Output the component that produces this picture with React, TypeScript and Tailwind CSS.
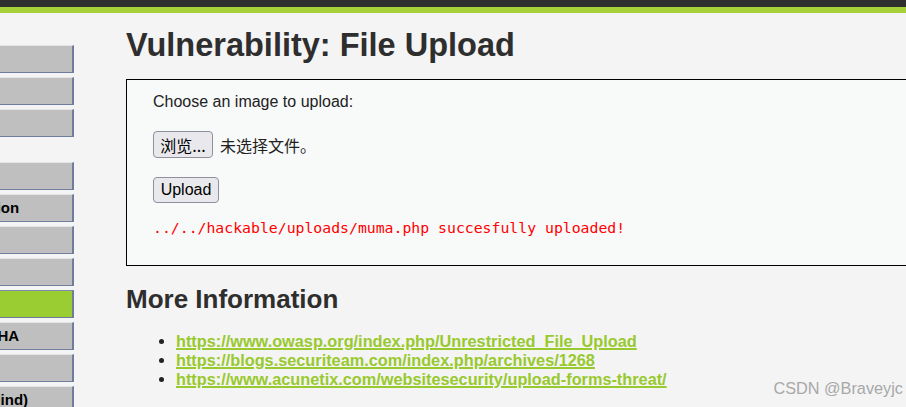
import React from "react";

const menuTop = [
  { label: "Home" },
  { label: "Instructions" },
  { label: "Setup", last: true },
];

const menuVulns = [
  { label: "Brute Force" },
  { label: "Command Injection" },
  { label: "CSRF" },
  { label: "File Inclusion" },
  { label: "File Upload", selected: true },
  { label: "Insecure CAPTCHA" },
  { label: "SQL Injection" },
  { label: "SQL Injection (Blind)" },
];

const links = [
  "https://www.owasp.org/index.php/Unrestricted_File_Upload",
  "https://blogs.securiteam.com/index.php/archives/1268",
  "https://www.acunetix.com/websitesecurity/upload-forms-threat/",
];

function MenuItem({ label, selected, last }: { label: string; selected?: boolean; last?: boolean }) {
  return (
    <div
      className={
        "h-[28px] flex items-center border-r-[2px] border-b border-[#6f7c9c] " +
        (selected ? "bg-[#9acd32] border-t border-t-[#7f8bab]" : "bg-[#bfbfbf] border-t border-t-[#e4e4e4]") +
        (last ? " mb-[25px]" : " mb-[4px]")
      }
    >
      {!selected && (
        <span className="-ml-[120px] whitespace-nowrap text-[15px] font-bold text-black">{label}</span>
      )}
    </div>
  );
}

export default function App() {
  return (
    <div className="relative w-[906px] h-[407px] overflow-hidden bg-[#f4f4f4] font-['Liberation_Sans',Arial,sans-serif] text-[#222]">
      {/* Header */}
      <div className="h-[7px] bg-[#2e2e2e]" />
      <div className="h-[6px] bg-[#a6d037]" />

      <div className="flex">
        {/* Side menu, scrolled off to the left */}
        <div className="w-[74px] shrink-0 overflow-hidden pt-[32px]">
          {menuTop.map((m) => (
            <MenuItem key={m.label} {...m} />
          ))}
          {menuVulns.map((m) => (
            <MenuItem key={m.label} {...m} />
          ))}
        </div>

        {/* Main body */}
        <div className="ml-[52px] shrink-0">
          <h1 className="mt-[14px] text-[32.5px] leading-[37px] font-bold text-[#2e2e2e] whitespace-nowrap">
            Vulnerability: File Upload
          </h1>

          <div className="mt-[15px] w-[820px] h-[187px] border border-black bg-[#f8f9f9] pl-[26px] pt-[13px]">
            <p className="text-[16px] leading-[18px] text-[#222]">Choose an image to upload:</p>
            <div className="mt-[20px] flex items-center gap-[7px]">
              <button className="w-[60px] h-[27px] flex items-center justify-center rounded-[4px] border border-[#8f8f9d] bg-[#e9e9ed] text-[16px] text-black font-['Noto_Sans_CJK_SC',sans-serif]">
                浏览...
              </button>
              <span className="text-[16px] text-[#222] font-['Noto_Sans_CJK_SC',sans-serif]">未选择文件。</span>
            </div>
            <button className="mt-[19px] w-[66px] h-[26px] flex items-center justify-center rounded-[4px] border border-[#8f8f9d] bg-[#e9e9ed] text-[16px] text-black">
              Upload
            </button>
            <pre className="mt-[16px] text-[14.8px] leading-[17px] text-[#ff0000] font-['DejaVu_Sans_Mono',monospace]">
              ../../hackable/uploads/muma.php succesfully uploaded!
            </pre>
          </div>

          <h2 className="mt-[18px] text-[26px] leading-[30px] font-bold text-[#2e2e2e]">More Information</h2>
          <ul className="mt-[18px] list-disc pl-[50px] text-[16.3px] leading-[19px]">
            {links.map((href) => (
              <li key={href} className="marker:text-[#222]">
                <a href={href} className="font-bold text-[#98c92e] underline decoration-2 underline-offset-[1px]">
                  {href}
                </a>
              </li>
            ))}
          </ul>
        </div>
      </div>

      {/* Watermark */}
      <div className="absolute right-[3px] bottom-[7px] text-[16.3px] text-[#a8a8a8] font-['Liberation_Sans',sans-serif]">
        CSDN @Braveyjc
      </div>
    </div>
  );
}
